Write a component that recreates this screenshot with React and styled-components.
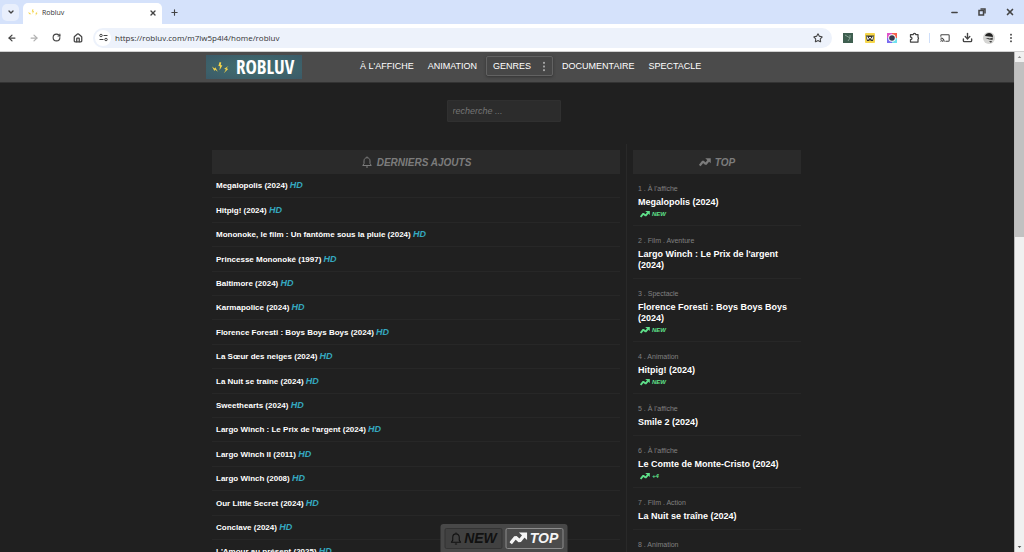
import React, { useState } from 'react';
import styled, { createGlobalStyle } from 'styled-components';
import {
  ArrowLeft, ArrowRight, ChevronDown, Download, House, Minus, Plus,
  RotateCw, Star, X, Cast,
} from 'lucide-react';

const latest = [
  'Megalopolis (2024)',
  'Hitpig! (2024)',
  'Mononoke, le film : Un fantôme sous la pluie (2024)',
  'Princesse Mononoké (1997)',
  'Baltimore (2024)',
  'Karmapolice (2024)',
  'Florence Foresti : Boys Boys Boys (2024)',
  'La Sœur des neiges (2024)',
  'La Nuit se traîne (2024)',
  'Sweethearts (2024)',
  "Largo Winch : Le Prix de l'argent (2024)",
  'Largo Winch II (2011)',
  'Largo Winch (2008)',
  'Our Little Secret (2024)',
  'Conclave (2024)',
  "L'Amour au présent (2025)",
];

const top = [
  { genre: "À l'affiche", title: 'Megalopolis (2024)', trend: 'NEW' },
  { genre: 'Film . Aventure', title: "Largo Winch : Le Prix de l'argent (2024)" },
  { genre: 'Spectacle', title: 'Florence Foresti : Boys Boys Boys (2024)', trend: 'NEW' },
  { genre: 'Animation', title: 'Hitpig! (2024)', trend: 'NEW' },
  { genre: "À l'affiche", title: 'Smile 2 (2024)' },
  { genre: "À l'affiche", title: 'Le Comte de Monte-Cristo (2024)', trend: '+4' },
  { genre: 'Film . Action', title: 'La Nuit se traîne (2024)' },
  { genre: 'Animation' },
];

function BellIcon({ size }) {
  return (
    <svg width={size} height={size} viewBox="0 0 24 24" fill="none" stroke="currentColor" strokeWidth="2" strokeLinejoin="round">
      <path d="M12 1v2.4c-3.8 0-6 2.8-6 6.4V15l-2.500 4h17L18 15V9.800c0-3.600-2.200-6.400-6-6.400" />
      <path d="M10 22h4" />
    </svg>
  );
}

function TrendIcon({ size }) {
  return (
    <svg width={size} height={size} viewBox="0 0 24 24" fill="none">
      <path d="M1.500 19l6.500-8 5.500 5 6-7.500" stroke="currentColor" strokeWidth="4.500" strokeLinejoin="bevel" />
      <path d="M12.500 4.500H23.500V14.500z" fill="currentColor" />
    </svg>
  );
}

function BoltsIcon({ width, height }) {
  return (
    <svg width={width} height={height} viewBox="0 0 17 11" fill="#f3d34a">
      <path d="M0 4.500l2.500 2 .8-1.200 2.500 4.400-2.600-1.900-.8 1.300z" />
      <path d="M7.600 0L6.400 4l1.600.3-.5 3.900 2.900-4.800-1.700-.3L9.300.4z" />
      <path d="M16.500 4l-4.300 2.800 1.700.7-1.900 3.500 4.200-4-1.700-.7z" />
    </svg>
  );
}

function SiteInfoIcon() {
  return (
    <svg width="9" height="9" viewBox="0 0 18 18" fill="none" stroke="#444" strokeWidth="2">
      <circle cx="4" cy="5" r="2.5" />
      <path d="M9 5h8M1 13h8" />
      <circle cx="14" cy="13" r="2.5" />
    </svg>
  );
}

function DotsIcon({ height }) {
  return (
    <svg width="4" height={height} viewBox="0 0 4 12" fill="currentColor">
      <rect x="1" y="1" width="2" height="2" />
      <rect x="1" y="5" width="2" height="2" />
      <rect x="1" y="9" width="2" height="2" />
    </svg>
  );
}

function RestoreIcon() {
  return (
    <svg width="8" height="8" viewBox="0 0 8 8" fill="none" stroke="currentColor" strokeWidth="1.5">
      <rect x="1" y="2.5" width="4.5" height="4.5" />
      <path d="M2.500 1H7v4.500" />
    </svg>
  );
}

function PuzzleIcon() {
  return (
    <svg width="11" height="11" viewBox="0 0 22 22" fill="none" stroke="currentColor" strokeWidth="2.5" strokeLinejoin="round">
      <path d="M3 5h5.500a2.500 2.500 0 0 1 5 0H18v5.500a2.500 2.500 0 0 1 0 4V20H3v-5c4 0 4-5 0-5z" />
    </svg>
  );
}

function Browser() {
  return (
    <>
      <TabStrip>
        <TabSearch aria-label="Rechercher dans les onglets"><ChevronDown size={8} strokeWidth={4} /></TabSearch>
        <Tab>
          <BoltsIcon width={10} height={7} />
          <TabTitle>Robluv</TabTitle>
          <IconButton aria-label="Fermer l'onglet"><X size={8} strokeWidth={4} /></IconButton>
        </Tab>
        <IconButton aria-label="Nouvel onglet"><Plus size={9} strokeWidth={3} /></IconButton>
        <WindowButtons>
          <IconButton aria-label="Réduire"><Minus size={9} strokeWidth={4} /></IconButton>
          <IconButton aria-label="Restaurer"><RestoreIcon /></IconButton>
          <IconButton aria-label="Fermer"><X size={10} strokeWidth={4} /></IconButton>
        </WindowButtons>
      </TabStrip>
      <Toolbar>
        <NavButtons>
          <IconButton aria-label="Retour"><ArrowLeft size={10} strokeWidth={3} /></IconButton>
          <IconButton aria-label="Avancer" $faded><ArrowRight size={10} strokeWidth={3} /></IconButton>
          <IconButton aria-label="Actualiser"><RotateCw size={9} strokeWidth={3} /></IconButton>
          <IconButton aria-label="Accueil"><House size={10} strokeWidth={3} /></IconButton>
        </NavButtons>
        <AddressBar>
          <SiteInfo aria-label="Informations sur le site"><SiteInfoIcon /></SiteInfo>
          <Url aria-label="Adresse" defaultValue="https://robluv.com/m7lw5p4l4/home/robluv" />
          <IconButton aria-label="Favori"><Star size={10} strokeWidth={2.5} /></IconButton>
        </AddressBar>
        <Extensions>
          <IconButton aria-label="Extension verte">
            <svg width="10" height="10" viewBox="0 0 10 10">
              <rect width="10" height="10" fill="#3f5f50" />
              <path d="M2 2l5 3M7 2v3L5 8" stroke="#86a394" fill="none" />
            </svg>
          </IconButton>
          <IconButton aria-label="Extension W">
            <svg width="10" height="10" viewBox="0 0 10 10">
              <rect width="10" height="10" rx="1" fill="#f6d64a" />
              <path d="M.8 2.500h8.400L8 8H6L5 7 4 8H2z" fill="#333" />
              <path d="M2 3.500l1 3 2-2.500 2 2.500 1-3" fill="none" stroke="#fff" />
            </svg>
          </IconButton>
          <IconButton aria-label="Capture">
            <svg width="10" height="10" viewBox="0 0 10 10">
              <path d="M0 0h5v5H0z" fill="#e052c8" />
              <path d="M5 0h5v5H5z" fill="#f7604c" />
              <path d="M0 5h5v5H0z" fill="#7a6cf0" />
              <path d="M5 5h5v5H5z" fill="#6fe0ee" />
              <circle cx="5" cy="5" r="3.8" fill="#fff" />
              <circle cx="5" cy="5" r="2.8" fill="#333b4d" />
            </svg>
          </IconButton>
          <IconButton aria-label="Extensions"><PuzzleIcon /></IconButton>
          <ToolbarRule />
          <IconButton aria-label="Caster"><Cast size={10} strokeWidth={2.5} /></IconButton>
          <IconButton aria-label="Téléchargements"><Download size={11} strokeWidth={3} /></IconButton>
          <IconButton aria-label="Profil">
            <svg width="12" height="12" viewBox="0 0 12 12">
              <circle cx="6" cy="6" r="6" fill="#d5d5d3" />
              <path d="M2 4c1-4 8-4 8 1L6 4.500z" fill="#222" />
              <path d="M2.500 6h3l1 .5L10 5.500 9.500 8 6 7.500zM6 9h3l-1 2z" fill="#444" />
            </svg>
          </IconButton>
          <IconButton aria-label="Menu"><DotsIcon height={10} /></IconButton>
        </Extensions>
      </Toolbar>
    </>
  );
}

export default function App() {
  const [search, setSearch] = useState('');

  return (
    <Window>
      <GlobalStyle />
      <Browser />
      <Frame>
        <Page>
          <SiteHeader>
            <SiteInner>
              <Logo href="#">
                <BoltsIcon width={17} height={11} />
                ROBLUV
              </Logo>
              <Menu>
                <MenuLink href="#">À L'AFFICHE</MenuLink>
                <MenuLink href="#">ANIMATION</MenuLink>
                <GenreButton>GENRES <DotsIcon height={11} /></GenreButton>
                <MenuLink href="#">DOCUMENTAIRE</MenuLink>
                <MenuLink href="#">SPECTACLE</MenuLink>
              </Menu>
            </SiteInner>
          </SiteHeader>

          <Content>
            <SearchForm onSubmit={e => e.preventDefault()}>
              <SearchInput
                aria-label="recherche"
                placeholder="recherche ..."
                value={search}
                onChange={e => setSearch(e.target.value)}
              />
            </SearchForm>
            <Columns>
              <Latest>
                <Heading><BellIcon size={12} /> DERNIERS AJOUTS</Heading>
                <List>
                  {latest.map(title => (
                    <LatestItem key={title}>
                      <FilmLink href="#">{title} <Quality>HD</Quality></FilmLink>
                    </LatestItem>
                  ))}
                </List>
              </Latest>
              <Top>
                <Heading><TrendIcon size={12} /> TOP</Heading>
                <List>
                  {top.map(({ genre, title, trend }, i) => (
                    <TopItem key={i}>
                      <Genre>{i + 1} . {genre}</Genre>
                      {title && <TopLink href="#">{title}</TopLink>}
                      {trend && <Trend><TrendIcon size={10} /> {trend}</Trend>}
                    </TopItem>
                  ))}
                </List>
              </Top>
            </Columns>
          </Content>

          <Switcher>
            <SwitchButton><BellIcon size={13} /> NEW</SwitchButton>
            <SwitchButton $active><TrendIcon size={18} /> TOP</SwitchButton>
          </Switcher>
        </Page>
        <Scrollbar>
          <ScrollArrow viewBox="0 0 10 10"><path d="M3 6l2-2 2 2z" fill="#8a8a8a" /></ScrollArrow>
          <ScrollThumb />
          <ScrollArrow viewBox="0 0 10 10"><path d="M3 4l2 2 2-2z" fill="#505050" /></ScrollArrow>
        </Scrollbar>
      </Frame>
    </Window>
  );
}


const GlobalStyle = createGlobalStyle`
  * {
    box-sizing: border-box;
  }
  body {
    margin: 0;
    background: #202020;
    font-family: "Liberation Sans", Arial, sans-serif;
  }
  button, input {
    font-family: inherit;
    margin: 0;
  }
  svg {
    display: block;
    flex: none;
  }
  a {
    text-decoration: none;
  }
`
const Window = styled.div`
  height: 100vh;
  display: flex;
  flex-direction: column;
  overflow: hidden;
`
const IconButton = styled.button`
  display: flex;
  align-items: center;
  justify-content: center;
  width: 12px;
  height: 12px;
  padding: 0;
  border: 0;
  background: none;
  color: ${p => (p.$faded ? '#b0b0b0' : '#444')};
`
const TabStrip = styled.div`
  flex: none;
  display: flex;
  align-items: center;
  height: 24px;
  padding: 0 8px 0 2px;
  background: #d5e2fb;
`
const TabSearch = styled(IconButton)`
  width: 17px;
  height: 17px;
  border-radius: 5px;
  background: #e9effc;
`
const Tab = styled.div`
  display: flex;
  align-items: center;
  align-self: flex-end;
  gap: 4px;
  width: 139px;
  height: 21px;
  margin: 0 6px 0 4px;
  padding: 0 3px 2px 5px;
  border-radius: 5px 5px 0 0;
  background: #fff;
`
const TabTitle = styled.span`
  flex: 1;
  font: 7px "Open Sans", sans-serif;
  color: #333;
`
const WindowButtons = styled.div`
  display: flex;
  gap: 16px;
  margin-left: auto;
`
const Toolbar = styled.div`
  flex: none;
  display: flex;
  align-items: center;
  height: 28px;
  padding: 0 7px 0 6px;
  background: #fff;
  border-bottom: 1px solid #d0d0d0;
`
const NavButtons = styled.div`
  display: flex;
  gap: 10px;
  margin-right: 9px;
`
const AddressBar = styled.div`
  flex: 1;
  display: flex;
  align-items: center;
  height: 20px;
  padding: 0 8px 0 2px;
  border-radius: 10px;
  background: #edf2fb;
`
const SiteInfo = styled(IconButton)`
  width: 16px;
  height: 16px;
  border-radius: 8px;
  background: #fff;
`
const Url = styled.input`
  flex: 1;
  min-width: 0;
  padding: 0 0 0 4px;
  border: 0;
  outline: none;
  background: none;
  font: 8px "Open Sans", sans-serif;
  color: #333;
`
const Extensions = styled.div`
  display: flex;
  align-items: center;
  gap: 10px;
  margin-left: 10px;
`
const ToolbarRule = styled.span`
  width: 1px;
  height: 10px;
  margin: 0 -1px;
  background: #cfdffa;
`
const Frame = styled.div`
  flex: 1;
  min-height: 0;
  display: flex;
`
const Page = styled.main`
  flex: 1;
  min-width: 0;
  position: relative;
  overflow: hidden;
  background: #202020;
`
const SiteHeader = styled.header`
  background: #4b4b4b;
  border-bottom: 1px solid #333;
`
const SiteInner = styled.div`
  display: flex;
  align-items: center;
  max-width: 602px;
  height: 30px;
  margin: 0 auto;
`
const Logo = styled.a`
  display: flex;
  align-items: center;
  gap: 7px;
  width: 96px;
  height: 24px;
  padding-left: 6px;
  background: radial-gradient(#43706f, #3a5a68);
  color: #fff;
  font: bold 19px "Liberation Sans Narrow", "Open Sans Condensed", Lato, sans-serif;
`
const Menu = styled.nav`
  display: flex;
  align-items: center;
  gap: 8px;
  margin-left: 55px;
  padding-bottom: 2px;
`
const MenuLink = styled.a`
  padding: 0 3px;
  font-size: 9px;
  line-height: 20px;
  color: #fff;
`
const GenreButton = styled.button`
  display: flex;
  align-items: center;
  justify-content: space-between;
  width: 67px;
  height: 20px;
  margin: 0 -2px;
  padding: 0 6px;
  border: 1px solid #626262;
  border-radius: 2px;
  background: #474747;
  box-shadow: 0 1px 3px #333;
  font-size: 9px;
  color: #fff;

  svg {
    color: #aaa;
  }
`
const Content = styled.div`
  max-width: 602px;
  margin: 0 auto;
  padding: 17px 7px 0 6px;
`
const SearchForm = styled.form`
  display: flex;
  justify-content: center;
  margin-bottom: 22px;
  padding-right: 6px;
`
const SearchInput = styled.input`
  width: 114px;
  height: 22px;
  padding: 0 5px 1px;
  border: 1px solid #303030;
  border-radius: 1px;
  outline: none;
  background: #2c2c2c;
  font-size: 9px;
  font-style: italic;
  color: #ddd;

  &::placeholder {
    color: #757575;
  }
`
const Columns = styled.div`
  display: flex;
`
const Latest = styled.section`
  flex: 1;
  padding: 6px 6px 0 0;
  border-right: 1px solid #292929;
`
const Top = styled.section`
  width: 174px;
  padding: 6px 0 0 6px;
`
const Heading = styled.h2`
  display: flex;
  align-items: center;
  justify-content: center;
  gap: 4px;
  height: 24px;
  margin: 0;
  background: #2a2a2a;
  font-size: 10px;
  font-style: italic;
  color: #7c7c7c;
`
const List = styled.ul`
  margin: 0;
  padding: 0;
  list-style: none;
`
const LatestItem = styled.li`
  display: flex;
  align-items: center;
  height: 24px;
  padding: 0 4px;
  border-bottom: 1px solid #272727;

  &:nth-child(5n + 2), &:nth-child(5n + 4) {
    height: 25px;
  }
`
const FilmLink = styled.a`
  font-size: 8px;
  font-weight: bold;
  line-height: 12px;
  color: #fff;
`
const Quality = styled.em`
  font-size: 9px;
  color: #35a9c0;
`
const TopItem = styled.li`
  padding: 9px 5px 7px;
  border-bottom: 1px solid #272727;
`
const Genre = styled.div`
  margin-bottom: 3px;
  font-size: 7px;
  line-height: 11px;
  color: #808080;
`
const TopLink = styled.a`
  display: block;
  font-size: 9px;
  font-weight: bold;
  line-height: 11px;
  color: #fff;
`
const Trend = styled.div`
  display: flex;
  align-items: center;
  gap: 2px;
  height: 10px;
  padding: 2px 0 0 2px;
  font-size: 6px;
  font-weight: bold;
  font-style: italic;
  color: #5fe08a;
`
const Switcher = styled.div`
  position: absolute;
  bottom: 0;
  left: 50%;
  transform: translateX(-50%);
  display: flex;
  gap: 3px;
  padding: 4px 4px 3px;
  border-radius: 3px 3px 0 0;
  background: #484848;
  margin-left: -3px;
`
const SwitchButton = styled.button`
  display: flex;
  align-items: center;
  justify-content: center;
  gap: 2px;
  width: 58px;
  height: 21px;
  padding: 0 1px 1px 0;
  border: 1px solid ${p => (p.$active ? '#8c8c8c' : '#333')};
  border-radius: 2px;
  background: ${p => (p.$active ? '#4b4b4b' : '#414141')};
  font-size: 14px;
  font-weight: bold;
  font-style: italic;
  color: ${p => (p.$active ? '#f5f5f5' : '#111')};
`
const Scrollbar = styled.div`
  flex: none;
  display: flex;
  flex-direction: column;
  width: 10px;
  border-left: 1px solid #bbb;
  background: #f0f0f0;
`
const ScrollArrow = styled.svg`
  height: 10px;
`
const ScrollThumb = styled.div`
  height: 35%;
  margin-bottom: auto;
  background: #c1c1c1;
`
